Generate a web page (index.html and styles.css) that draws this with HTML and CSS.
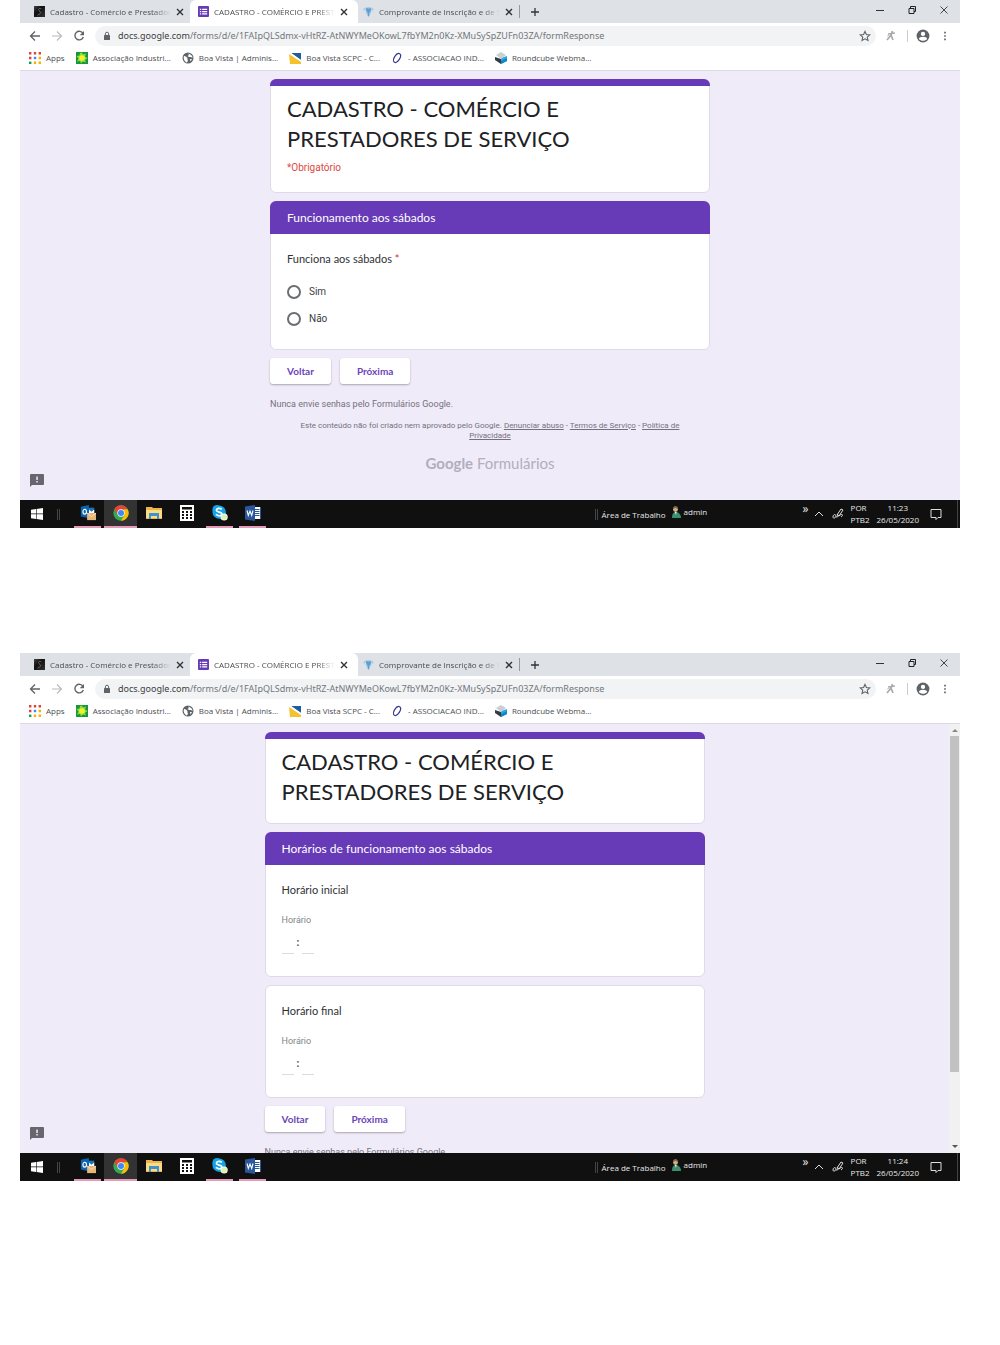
FILE: index.html
```html
<!DOCTYPE html>
<html lang="pt-BR">
<head>
    <meta charset="UTF-8">
    <meta name="viewport" content="width=device-width, initial-scale=1">
    <title>CADASTRO - COMÉRCIO E PRESTADORES DE SERVIÇO</title>
    <link rel="stylesheet" href="styles.css">
</head>
<body>

    <!-- Ícones usados nas duas janelas -->
    <svg class="sprite" aria-hidden="true">
        <linearGradient id="dark" x1="0" y1="0" x2="1" y2="1"><stop offset="0" stop-color="#444"/><stop offset=".4" stop-color="#111"/><stop offset="1" stop-color="#333"/></linearGradient>
        <symbol id="i-site" viewBox="0 0 12 12"><path fill="url(#dark)" d="M0 0h12v12H0z"/><path d="M8 3C5 2 4 4 6 5.500S8 8 4 10" fill="none" stroke="#888" stroke-width=".8"/></symbol>
        <symbol id="i-forms" viewBox="0 0 12 12"><rect width="12" height="12" rx="1" fill="#673ab7"/><path fill="#fff" d="M2 3h1.500v1.400H2zM4.500 3H10v1.400H4.500zM2 5.400h1.500v1.400H2zM4.500 5.400H10v1.400H4.500zM2 7.800h1.500v1.400H2zM4.500 7.800H10v1.400H4.500z"/></symbol>
        <symbol id="i-gem" viewBox="0 0 12 12"><path fill="#a9cbe4" d="M0 4l2-2 4-1 4 1 2 2-3 2.500L6.500 12h-1L3 6.500z"/><path fill="#5f9fd0" d="M4 2l2 1 2-1 1 3-2 2-.5 4h-1L5 7 3 5z"/><path fill="#dcebf5" d="M1 4h2l1 2H3zM8.500 5L11 4 9 6.300z"/></symbol>
        <symbol id="i-close" viewBox="0 0 8 8"><path d="M1 1l6 6M7 1L1 7" stroke="#333" stroke-width="1.400"/></symbol>
        <symbol id="i-plus" viewBox="0 0 10 10"><path d="M5 1v8M1 5h8" stroke="#333" stroke-width="1.300"/></symbol>
        <symbol id="i-min" viewBox="0 0 10 10"><path d="M1 5.500h8" stroke="#333"/></symbol>
        <symbol id="i-max" viewBox="0 0 10 10"><path d="M2 3.500h5v5H2zM3.500 3.500v-2h5v5H7" fill="none" stroke="#222"/></symbol>
        <symbol id="i-exit" viewBox="0 0 10 10"><path d="M1.500 1.500l7 7M8.500 1.500l-7 7" stroke="#333" stroke-width=".9"/></symbol>
        <symbol id="i-back" viewBox="0 0 12 12"><path d="M11 6H2M6 1.500L1.500 6 6 10.500" fill="none" stroke="#5f6368" stroke-width="1.300"/></symbol>
        <symbol id="i-forward" viewBox="0 0 12 12"><path d="M1 6h9M6 1.500L10.500 6 6 10.500" fill="none" stroke="#b8babc" stroke-width="1.200"/></symbol>
        <symbol id="i-reload" viewBox="0 0 12 12"><path d="M10 3.500A4.300 4.300 0 1 0 10.300 7" fill="none" stroke="#5f6368" stroke-width="1.400"/><path d="M11 1v4.300H6.700z" fill="#5f6368"/></symbol>
        <symbol id="i-lock" viewBox="0 0 8 10"><rect x="1" y="4" width="6" height="5" rx=".6" fill="#5f6368"/><path d="M2.400 4V2.800a1.600 1.600 0 0 1 3.200 0V4" fill="none" stroke="#5f6368"/></symbol>
        <symbol id="i-star" viewBox="0 0 24 24"><path d="M12 2.800l2.800 6.200 6.700.700-5 4.600 1.400 6.700-5.900-3.400L6.100 21l1.400-6.700-5-4.600 6.700-.7z" fill="none" stroke="#5f6368" stroke-width="2.200"/></symbol>
        <symbol id="i-ext" viewBox="0 0 12 12"><path d="M3 4l7-1M7.500 1L6 5 2 10M6 5l2 5" fill="none" stroke="#aaa" stroke-width="1.700"/><path d="M2 6l3-1" stroke="#ccc"/></symbol>
        <symbol id="i-user" viewBox="0 0 24 24"><circle cx="12" cy="12" r="11" fill="#5f6368"/><circle cx="12" cy="8.500" r="3.700" fill="#fff"/><path d="M5 17c0-5 14-5 14 0-3 4-11 4-14 0z" fill="#fff"/></symbol>
        <symbol id="i-dots" viewBox="0 0 4 12"><path fill="#5f6368" d="M1 1h2v2H1zM1 5h2v2H1zM1 9h2v2H1z"/></symbol>
        <symbol id="i-apps" viewBox="0 0 10 10"><path fill="#db4437" d="M0 0h2v2H0zM4 0h2v2H4zM8 0h2v2H8zM0 4h2v2H0z"/><path fill="#4285f4" d="M4 4h2v2H4z"/><path fill="#f4b400" d="M8 4h2v2H8zM8 8h2v2H8zM4 8h2v2H4z"/><path fill="#0f9d58" d="M0 8h2v2H0z"/></symbol>
        <symbol id="i-sun" viewBox="0 0 12 12"><path fill="#17963b" d="M0 0h12v12H0z"/><path d="M6 .5l1 2 3-1-1 3 2.500 1.500L9 8l1 2.500-3-1-2 2-1-2.500-3 .500 1.500-3L.5 4l3-.5L4 1z" fill="#8ede3e"/><circle cx="6" cy="6" r="2.800" fill="#f5f02a"/></symbol>
        <symbol id="i-globe" viewBox="0 0 12 12"><circle cx="6" cy="6" r="5.500" fill="#5f6368"/><path fill="#fff" d="M2 4c2 0 2 1 3 1.500S5 8 6 8.500l-1 2C3 10 1 7 2 4zM6 1.500l1 1.500-1.500 1L7 5h2l1.500 1C10.500 4 9 2 6 1.500zM8 7l2 0-1.500 2.500z"/></symbol>
        <symbol id="i-boa" viewBox="0 0 12 12"><path fill="#1f5da0" d="M2 1h10v7z"/><path fill="#fff" d="M1 1l11 8v-1L2 1z"/><path fill="#f5c12e" d="M0 2l12 8v2H1z"/></symbol>
        <symbol id="i-ring" viewBox="0 0 12 12"><ellipse cx="6" cy="6" rx="2.700" ry="5" transform="rotate(32 6 6)" fill="none" stroke="#39368f" stroke-width="1.200"/></symbol>
        <symbol id="i-cube" viewBox="0 0 12 12"><path fill="#2fa8e0" d="M6 6l6-2v5l-6 3z"/><path fill="#333b44" d="M0 5l6 2v5L0 8z"/><path fill="#c9d0d4" d="M1 3l5-3 5 3-5 4z"/><path fill="#1586c4" d="M6 9l6-3v3l-6 3z"/></symbol>
        <symbol id="i-feedback" viewBox="0 0 14 14"><path fill="#68656e" d="M1 0h12a1 1 0 0 1 1 1v9a1 1 0 0 1-1 1H2l-2 2V1a1 1 0 0 1 1-1z"/><path fill="#fff" d="M6.400 2.500h1.300v3.500H6.400zM6.400 7h1.300v1.400H6.400z"/></symbol>

        <symbol id="t-start" viewBox="0 0 12 12"><path fill="#fff" d="M0 1.700l5-.7v4.600H0zM5.600.9L12 0v5.600H5.600zM0 6.300h5V11l-5-.7zM5.600 6.300H12V12l-6.400-.9z"/></symbol>
        <symbol id="t-outlook" viewBox="0 0 18 18"><path fill="#1b75bc" d="M9 3h7v8H9z"/><path fill="#fff" d="M10 5l3 2.500L16 5v4h-6z"/><path fill="#0a64b0" d="M1 2l9-2v15l-9-2z"/><ellipse cx="5.300" cy="7.500" rx="2" ry="2.700" fill="none" stroke="#fff" stroke-width="1.300"/><path fill="#e9b67a" d="M8 9h10v8H8z"/><path d="M8 9l5 4 5-4" fill="none" stroke="#fff3df" stroke-width=".8"/></symbol>
        <symbol id="t-chrome" viewBox="0 0 48 48"><circle cx="24" cy="24" r="23" fill="#34a853"/><path fill="#ea4335" d="M4.100 12.500a23 23 0 0 1 39.800 0H24L14.500 29z"/><path fill="#fbbc05" d="M43.900 12.500A23 23 0 0 1 24 47l10-17.300-2-17.200z"/><circle cx="24" cy="24" r="11" fill="#fff"/><circle cx="24" cy="24" r="9" fill="#4285f4"/></symbol>
        <symbol id="t-folder" viewBox="0 0 16 14"><path fill="#e8b64a" d="M0 1h6l1 1h9v11H0z"/><path fill="#fbdc82" d="M0 4h16v8H0z"/><path fill="#3d92cf" d="M3 13V7h10v6h-2v-3H5v3z"/></symbol>
        <symbol id="t-calc" viewBox="0 0 14 16"><path fill="#fff" d="M0 0h14v16H0z"/><path fill="#111" d="M2 2h10v2.500H2zM2 6h2v2H2zM6 6h2v2H6zM10 6h2v2h-2zM2 9h2v2H2zM6 9h2v2H6zM10 9h2v2h-2zM2 12h2v2H2zM6 12h2v2H6zM10 12h2v2h-2z"/></symbol>
        <symbol id="t-skype" viewBox="0 0 18 18"><circle cx="5.500" cy="5" r="5" fill="#12a5e8"/><circle cx="8" cy="8" r="7.500" fill="#12a5e8"/><circle cx="11" cy="11" r="5" fill="#12a5e8"/><path d="M11 5C9 3 5 3.500 5 6s6 1.500 6 4-4.500 3-6.500.500" fill="none" stroke="#fff" stroke-width="1.900"/><circle cx="13.700" cy="13.500" r="4" fill="#fff"/><circle cx="13.700" cy="13.500" r="3.200" fill="#dff3b0"/></symbol>
        <symbol id="t-word" viewBox="0 0 16 16"><path fill="#fff" d="M8 2h8v12H8z"/><path d="M9 4.500h5.500M9 6.500h5.500M9 8.500h5.500M9 10.500h5.500M15.500 2v12" stroke="#2b579a"/><path fill="#2b579a" d="M0 1.500L10 0v16L0 14.500z"/><path d="M2 5.500l1.300 5L5 6l1.700 4.500L8 5.500" fill="none" stroke="#fff" stroke-width="1.100"/></symbol>
        <symbol id="t-person" viewBox="0 0 10 12"><path fill="#3d8f6d" d="M1 12c0-6 3-6 4-6s5 1 5 6z"/><circle cx="4.500" cy="3.500" r="2.400" fill="#d9ae86"/><path fill="#7d6a5a" d="M2 3c0-4 5-4 5 0L4.500 2z"/><path fill="#fff" d="M4 6h1.500L5 9z"/></symbol>
        <symbol id="t-up" viewBox="0 0 12 12"><path d="M2 8l4-4 4 4" fill="none" stroke="#ddd"/></symbol>
        <symbol id="t-pen" viewBox="0 0 12 12"><path d="M1 9c0-3 3-3 3-1s-3 3-3 1zM4 9c3 0 3-2 1-3M5 7l4-6 2 1-4 6zM7 8c3-3 5-1 2 1" fill="none" stroke="#ddd"/></symbol>
        <symbol id="t-note" viewBox="0 0 12 12"><path d="M1 1.500h10v8H8l-2 2v-2H1z" fill="none" stroke="#ddd"/></symbol>
    </svg>

    <section class="window">
        <header class="browser">
            <div class="tabs">
                <div class="tab">
                    <svg class="icon"><use href="#i-site"/></svg>
                    <span class="tab-title">Cadastro - Comércio e Prestadores</span>
                    <button class="tab-close" aria-label="Fechar guia"><svg><use href="#i-close"/></svg></button>
                </div>
                <div class="tab active">
                    <svg class="icon"><use href="#i-forms"/></svg>
                    <span class="tab-title">CADASTRO - COMÉRCIO E PRESTADORES</span>
                    <button class="tab-close" aria-label="Fechar guia"><svg><use href="#i-close"/></svg></button>
                </div>
                <div class="tab last">
                    <svg class="icon"><use href="#i-gem"/></svg>
                    <span class="tab-title">Comprovante de Inscrição e de Situação</span>
                    <button class="tab-close" aria-label="Fechar guia"><svg><use href="#i-close"/></svg></button>
                </div>
                <button class="new-tab" aria-label="Nova guia"><svg><use href="#i-plus"/></svg></button>
                <div class="window-controls">
                    <button aria-label="Minimizar"><svg><use href="#i-min"/></svg></button>
                    <button aria-label="Restaurar"><svg><use href="#i-max"/></svg></button>
                    <button aria-label="Fechar"><svg><use href="#i-exit"/></svg></button>
                </div>
            </div>
            <div class="toolbar">
                <button aria-label="Voltar"><svg><use href="#i-back"/></svg></button>
                <button aria-label="Avançar"><svg><use href="#i-forward"/></svg></button>
                <button aria-label="Recarregar"><svg><use href="#i-reload"/></svg></button>
                <div class="address">
                    <svg class="lock"><use href="#i-lock"/></svg>
                    <label for="url1">docs.google.com</label>
                    <input type="text" id="url1" value="/forms/d/e/1FAIpQLSdmx-vHtRZ-AtNWYMeOKowL7fbYM2n0Kz-XMuSySpZUFn03ZA/formResponse">
                    <button aria-label="Favoritar"><svg><use href="#i-star"/></svg></button>
                </div>
                <button aria-label="Extensão"><svg><use href="#i-ext"/></svg></button>
                <span class="separator"></span>
                <button class="profile" aria-label="Perfil"><svg><use href="#i-user"/></svg></button>
                <button class="more" aria-label="Menu"><svg><use href="#i-dots"/></svg></button>
            </div>
            <nav class="bookmarks">
                <a href="#"><svg><use href="#i-apps"/></svg>Apps</a>
                <a href="#"><svg><use href="#i-sun"/></svg>Associação Industri...</a>
                <a href="#"><svg><use href="#i-globe"/></svg>Boa Vista | Adminis...</a>
                <a href="#"><svg><use href="#i-boa"/></svg>Boa Vista SCPC - C...</a>
                <a href="#"><svg><use href="#i-ring"/></svg>- ASSOCIACAO IND...</a>
                <a href="#"><svg><use href="#i-cube"/></svg>Roundcube Webma...</a>
            </nav>
        </header>

        <main class="page">
            <form class="form">
                <div class="card title-card">
                    <h1>CADASTRO - COMÉRCIO E PRESTADORES DE SERVIÇO</h1>
                    <p class="required">*Obrigatório</p>
                </div>
                <div class="card">
                    <h2>Funcionamento aos sábados</h2>
                    <fieldset class="question">
                        <legend>Funciona aos sábados <span class="star">*</span></legend>
                        <div class="options">
                            <label><input type="radio" name="sabado" value="sim">Sim</label>
                            <label><input type="radio" name="sabado" value="nao">Não</label>
                        </div>
                    </fieldset>
                </div>
                <div class="actions">
                    <button type="button">Voltar</button>
                    <button type="button">Próxima</button>
                </div>
                <p class="warning">Nunca envie senhas pelo Formulários Google.</p>
                <p class="legal">Este conteúdo não foi criado nem aprovado pelo Google. <a href="#">Denunciar abuso</a> - <a href="#">Termos de Serviço</a> - <a href="#">Política de Privacidade</a></p>
                <p class="brand"><b>Google</b> Formulários</p>
            </form>
            <button class="feedback" aria-label="Denunciar problema"><svg><use href="#i-feedback"/></svg></button>
        </main>

        <footer class="taskbar">
            <button class="start" aria-label="Iniciar"><svg><use href="#t-start"/></svg></button>
            <span class="grip"></span>
            <div class="apps">
                <button class="open" aria-label="Outlook"><svg><use href="#t-outlook"/></svg></button>
                <button class="open current" aria-label="Chrome"><svg><use href="#t-chrome"/></svg></button>
                <button aria-label="Explorador"><svg><use href="#t-folder"/></svg></button>
                <button aria-label="Calculadora"><svg><use href="#t-calc"/></svg></button>
                <button class="open" aria-label="Skype"><svg><use href="#t-skype"/></svg></button>
                <button class="open" aria-label="Word"><svg><use href="#t-word"/></svg></button>
            </div>
            <div class="desktop-bar">
                <span class="grip"></span>
                <span>Área de Trabalho</span>
                <span class="admin"><svg><use href="#t-person"/></svg>admin</span>
                <span class="chevrons">»</span>
            </div>
            <div class="tray">
                <svg><use href="#t-up"/></svg>
                <svg><use href="#t-pen"/></svg>
                <span class="lang">POR<br>PTB2</span>
                <span class="clock">11:23<br>26/05/2020</span>
                <svg><use href="#t-note"/></svg>
            </div>
        </footer>
    </section>

    <section class="window">
        <header class="browser">
            <div class="tabs">
                <div class="tab">
                    <svg class="icon"><use href="#i-site"/></svg>
                    <span class="tab-title">Cadastro - Comércio e Prestadores</span>
                    <button class="tab-close" aria-label="Fechar guia"><svg><use href="#i-close"/></svg></button>
                </div>
                <div class="tab active">
                    <svg class="icon"><use href="#i-forms"/></svg>
                    <span class="tab-title">CADASTRO - COMÉRCIO E PRESTADORES</span>
                    <button class="tab-close" aria-label="Fechar guia"><svg><use href="#i-close"/></svg></button>
                </div>
                <div class="tab last">
                    <svg class="icon"><use href="#i-gem"/></svg>
                    <span class="tab-title">Comprovante de Inscrição e de Situação</span>
                    <button class="tab-close" aria-label="Fechar guia"><svg><use href="#i-close"/></svg></button>
                </div>
                <button class="new-tab" aria-label="Nova guia"><svg><use href="#i-plus"/></svg></button>
                <div class="window-controls">
                    <button aria-label="Minimizar"><svg><use href="#i-min"/></svg></button>
                    <button aria-label="Restaurar"><svg><use href="#i-max"/></svg></button>
                    <button aria-label="Fechar"><svg><use href="#i-exit"/></svg></button>
                </div>
            </div>
            <div class="toolbar">
                <button aria-label="Voltar"><svg><use href="#i-back"/></svg></button>
                <button aria-label="Avançar"><svg><use href="#i-forward"/></svg></button>
                <button aria-label="Recarregar"><svg><use href="#i-reload"/></svg></button>
                <div class="address">
                    <svg class="lock"><use href="#i-lock"/></svg>
                    <label for="url2">docs.google.com</label>
                    <input type="text" id="url2" value="/forms/d/e/1FAIpQLSdmx-vHtRZ-AtNWYMeOKowL7fbYM2n0Kz-XMuSySpZUFn03ZA/formResponse">
                    <button aria-label="Favoritar"><svg><use href="#i-star"/></svg></button>
                </div>
                <button aria-label="Extensão"><svg><use href="#i-ext"/></svg></button>
                <span class="separator"></span>
                <button class="profile" aria-label="Perfil"><svg><use href="#i-user"/></svg></button>
                <button class="more" aria-label="Menu"><svg><use href="#i-dots"/></svg></button>
            </div>
            <nav class="bookmarks">
                <a href="#"><svg><use href="#i-apps"/></svg>Apps</a>
                <a href="#"><svg><use href="#i-sun"/></svg>Associação Industri...</a>
                <a href="#"><svg><use href="#i-globe"/></svg>Boa Vista | Adminis...</a>
                <a href="#"><svg><use href="#i-boa"/></svg>Boa Vista SCPC - C...</a>
                <a href="#"><svg><use href="#i-ring"/></svg>- ASSOCIACAO IND...</a>
                <a href="#"><svg><use href="#i-cube"/></svg>Roundcube Webma...</a>
            </nav>
        </header>

        <main class="page scrolled">
            <form class="form">
                <div class="card title-card">
                    <h1>CADASTRO - COMÉRCIO E PRESTADORES DE SERVIÇO</h1>
                </div>
                <div class="card">
                    <h2>Horários de funcionamento aos sábados</h2>
                    <fieldset class="question time-question">
                        <legend>Horário inicial</legend>
                        <label class="hint" for="horaInicial">Horário</label>
                        <div class="time">
                            <input type="text" id="horaInicial" maxlength="2" aria-label="Hora inicial">
                            <span>:</span>
                            <input type="text" maxlength="2" aria-label="Minuto inicial">
                        </div>
                    </fieldset>
                </div>
                <div class="card">
                    <fieldset class="question time-question">
                        <legend>Horário final</legend>
                        <label class="hint" for="horaFinal">Horário</label>
                        <div class="time">
                            <input type="text" id="horaFinal" maxlength="2" aria-label="Hora final">
                            <span>:</span>
                            <input type="text" maxlength="2" aria-label="Minuto final">
                        </div>
                    </fieldset>
                </div>
                <div class="actions">
                    <button type="button">Voltar</button>
                    <button type="button">Próxima</button>
                </div>
                <p class="warning">Nunca envie senhas pelo Formulários Google.</p>
            </form>
            <div class="scrollbar">
                <span class="arrow-up"></span>
                <div class="track"><div class="thumb"></div></div>
                <span class="arrow-down"></span>
            </div>
            <button class="feedback" aria-label="Denunciar problema"><svg><use href="#i-feedback"/></svg></button>
        </main>

        <footer class="taskbar">
            <button class="start" aria-label="Iniciar"><svg><use href="#t-start"/></svg></button>
            <span class="grip"></span>
            <div class="apps">
                <button class="open" aria-label="Outlook"><svg><use href="#t-outlook"/></svg></button>
                <button class="open current" aria-label="Chrome"><svg><use href="#t-chrome"/></svg></button>
                <button aria-label="Explorador"><svg><use href="#t-folder"/></svg></button>
                <button aria-label="Calculadora"><svg><use href="#t-calc"/></svg></button>
                <button class="open" aria-label="Skype"><svg><use href="#t-skype"/></svg></button>
                <button class="open" aria-label="Word"><svg><use href="#t-word"/></svg></button>
            </div>
            <div class="desktop-bar">
                <span class="grip"></span>
                <span>Área de Trabalho</span>
                <span class="admin"><svg><use href="#t-person"/></svg>admin</span>
                <span class="chevrons">»</span>
            </div>
            <div class="tray">
                <svg><use href="#t-up"/></svg>
                <svg><use href="#t-pen"/></svg>
                <span class="lang">POR<br>PTB2</span>
                <span class="clock">11:24<br>26/05/2020</span>
                <svg><use href="#t-note"/></svg>
            </div>
        </footer>
    </section>

</body>
</html>
```
FILE: styles.css
```css
* {
    box-sizing: border-box;
}
body {
    margin: 0;
    padding: 0 40px 0 20px;
    background: #fff;
    font-family: 'Open Sans', 'Noto Sans', sans-serif;
    font-size: 8px;
    color: #4a4d51;
}
h1, h2, p, fieldset, legend {
    margin: 0;
    padding: 0;
    border: 0;
}
button, input {
    margin: 0;
    padding: 0;
    border: 0;
    background: none;
    font: inherit;
    color: inherit;
}
button {
    display: flex;
    align-items: center;
    justify-content: center;
    cursor: pointer;
}
svg {
    display: block;
    flex: none;
    width: 12px;
    height: 12px;
}
.sprite {
    position: absolute;
    width: 0;
    height: 0;
}
.window {
    margin-bottom: 125px;
}

/* Guias */
.tabs {
    display: flex;
    height: 23px;
    background: #dee1e6;
}
.tab {
    display: flex;
    align-items: center;
    gap: 5px;
    width: 170px;
    padding: 0 6px 0 14px;
}
.tab.active {
    width: 168px;
    padding: 0 10px 0 8px;
    background: #fff;
    border-radius: 6px 6px 0 0;
}
.tab.last {
    width: 161px;
    padding: 0 6px 0 5px;
}
.icon {
    width: 11px;
    height: 11px;
}
.tab-title {
    flex: 1;
    overflow: hidden;
    white-space: nowrap;
    -webkit-mask-image: linear-gradient(to right, #000 85%, transparent);
    mask-image: linear-gradient(to right, #000 85%, transparent);
}
.tab-close svg {
    width: 8px;
    height: 8px;
}
.new-tab {
    align-self: center;
    height: 13px;
    padding: 0 10px;
    border-left: 1px solid #96999e;
}
.new-tab svg,
.window-controls svg {
    width: 10px;
    height: 10px;
}
.window-controls {
    display: flex;
    margin-left: auto;
    height: 20px;
}
.window-controls button {
    width: 32px;
}

/* Barra de endereço */
.toolbar {
    display: flex;
    align-items: center;
    height: 25px;
    padding-left: 4px;
    background: #fff;
}
.toolbar button {
    width: 22px;
}
.address {
    display: flex;
    flex: 1;
    align-items: center;
    height: 20px;
    margin: 0 4px 0 5px;
    padding-left: 8px;
    border-radius: 10px;
    background: #f1f3f4;
    font-family: 'Noto Sans', 'Open Sans', sans-serif;
    font-size: 9px;
    color: #74777b;
}
.address label {
    margin-left: 7px;
    color: #3c4043;
}
.address input {
    flex: 1;
    min-width: 0;
    outline: none;
}
.address .lock {
    width: 8px;
    height: 10px;
}
.separator {
    width: 1px;
    height: 12px;
    margin-left: 5px;
    background: #ccc;
}
.toolbar .profile {
    width: 29px;
}
.profile svg {
    width: 14px;
    height: 14px;
}
.toolbar .more {
    width: 15px;
    margin-right: 8px;
}
.more svg {
    width: 4px;
    height: 10px;
}

/* Favoritos */
.bookmarks {
    display: flex;
    align-items: center;
    gap: 11px;
    height: 23px;
    padding: 0 9px 3px;
    border-bottom: 1px solid #dcd9e2;
    background: #fff;
}
.bookmarks a {
    display: flex;
    align-items: center;
    gap: 5px;
    color: inherit;
    text-decoration: none;
    white-space: nowrap;
}

/* Formulário */
.page {
    position: relative;
    display: flex;
    min-height: 429px;
    background: #f0ebf8;
    font-family: Roboto, sans-serif;
}
.page.scrolled {
    height: 429px;
    overflow: hidden;
}
.form {
    width: 440px;
    max-width: 100%;
    margin: 0 auto;
    padding-top: 8px;
}
.card {
    margin-bottom: 8px;
    border: 1px solid #dfdae8;
    border-radius: 6px;
    background: #fff;
}
.title-card {
    padding: 0 16px 16px;
}
.title-card::before {
    content: "";
    display: block;
    height: 7px;
    margin: -1px -17px 8px;
    border-radius: 6px 6px 0 0;
    background: #673ab7;
}
h1, h2, legend, .actions, .brand {
    font-family: Lato, sans-serif;
}
h1 {
    max-width: 300px;
    font-size: 22px;
    line-height: 30px;
    font-weight: 400;
    color: #202124;
}
.required {
    margin-top: 6px;
    font-size: 10px;
    line-height: 16px;
    color: #dc4a41;
}
h2 {
    margin: -1px -1px 0;
    padding: 0 17px;
    border-radius: 6px 6px 0 0;
    background: #673ab7;
    font-size: 12px;
    line-height: 33px;
    font-weight: 400;
    color: #fff;
}
.question {
    padding: 17px 16px;
}
legend {
    float: left;
    width: 100%;
    font-size: 11px;
    line-height: 16px;
    color: #303134;
}
.star {
    color: #d93025;
}
.options {
    clear: both;
    padding-top: 11px;
}
.options label {
    display: flex;
    align-items: center;
    gap: 8px;
    height: 27px;
    font-size: 10px;
    color: #3c4043;
}
.options input {
    width: 14px;
    height: 14px;
    border: 2px solid #6b6f73;
    border-radius: 50%;
    appearance: none;
}
.options input:checked {
    border: 5px solid #673ab7;
}
.time-question {
    padding-bottom: 22px;
}
.hint {
    display: block;
    clear: both;
    padding-top: 15px;
    font-size: 9px;
    line-height: 14px;
    color: #80858a;
}
.time {
    display: flex;
    gap: 3px;
    height: 20px;
    margin-top: 7px;
    font-size: 10px;
    line-height: 18px;
    font-weight: 700;
}
.time input {
    width: 12px;
    border-bottom: 1px solid #dadce0;
    outline: none;
}
.actions {
    display: flex;
    gap: 9px;
}
.actions button {
    height: 26px;
    padding: 0 17px;
    border-radius: 3px;
    background: #fff;
    box-shadow: 0 1px 2px rgba(0, 0, 0, 0.3);
    font-size: 10px;
    font-weight: 700;
    color: #6b45b8;
}
.warning {
    margin-top: 13px;
    font-size: 9px;
    line-height: 14px;
    color: #75717c;
}
.legal {
    margin-top: 10px;
    padding: 0 20px;
    font-size: 8px;
    line-height: 10px;
    text-align: center;
    color: #75717c;
}
.legal a {
    color: inherit;
}
.brand {
    margin-top: 12px;
    font-size: 15px;
    line-height: 20px;
    text-align: center;
    color: #b2aebb;
}
.feedback {
    position: absolute;
    bottom: 12px;
    left: 10px;
}
.feedback svg {
    width: 14px;
    height: 14px;
}

/* Barra de rolagem */
.scrollbar {
    display: flex;
    flex-direction: column;
    align-items: center;
    width: 11px;
    padding: 5px 0;
    background: #f1f1f1;
}
.track {
    flex: 1;
    width: 9px;
    margin: 4px 0;
}
.thumb {
    height: 83%;
    background: #c1c1c1;
}
.arrow-up, .arrow-down {
    border: 3px solid transparent;
}
.arrow-up {
    border-top: 0;
    border-bottom-color: #888;
}
.arrow-down {
    border-bottom: 0;
    border-top-color: #555;
}

/* Barra de tarefas */
.taskbar {
    display: flex;
    height: 28px;
    background: #101010;
    color: #e8e8e8;
}
.start {
    width: 33px;
}
.grip {
    align-self: center;
    width: 3px;
    height: 11px;
    margin: 0 4px;
    border: solid #444;
    border-width: 0 1px;
}
.apps {
    display: flex;
    margin-left: 7px;
}
.apps button {
    width: 33px;
    border-bottom: 2px solid transparent;
}
.apps .open {
    width: 27px;
    margin: 0 3px;
    border-bottom-color: #e59ab8;
}
.apps .current {
    width: 33px;
    margin: 0;
    background: #333;
}
.apps svg {
    width: 16px;
    height: 16px;
}
.desktop-bar {
    display: flex;
    align-items: center;
    width: 218px;
    margin-left: auto;
}
.admin {
    display: flex;
    align-items: center;
    gap: 2px;
    margin-left: 4px;
    padding-bottom: 5px;
}
.chevrons {
    margin-left: auto;
    padding-bottom: 12px;
    font-size: 12px;
}
.tray {
    display: flex;
    align-items: center;
    gap: 7px;
    margin-right: 2px;
    padding: 0 15px 0 4px;
    border-right: 1px solid #444;
    line-height: 12px;
}
.clock {
    margin-right: 4px;
    text-align: center;
}
```
